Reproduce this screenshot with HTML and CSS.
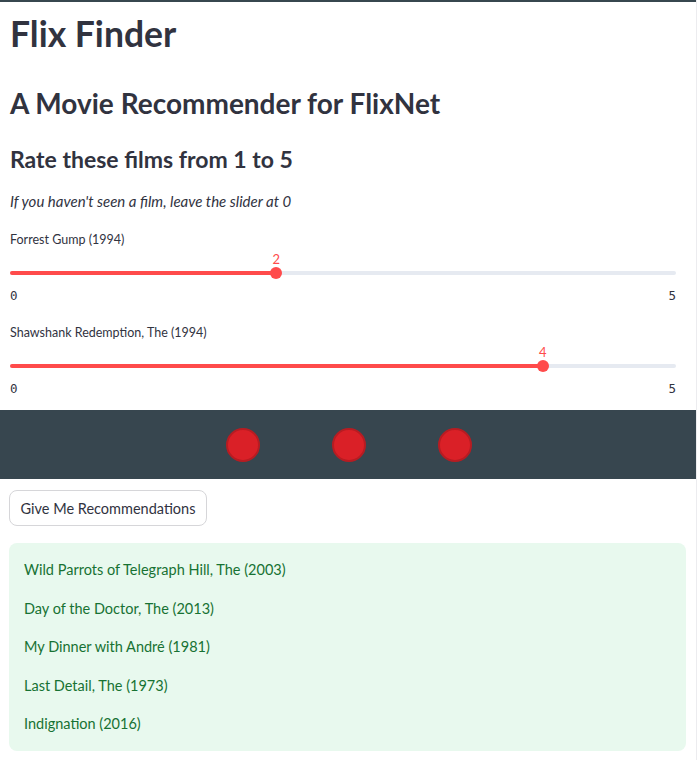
FILE: index.html
```html
<!DOCTYPE html>
<html lang="en">
<head>
<meta charset="utf-8">
<title>Flix Finder</title>
<link rel="stylesheet" href="styles.css">
</head>
<body>
<div class="page">
  <div class="topbar"></div>
  <div class="content">
    <h1 class="title">Flix Finder</h1>
    <h2 class="subtitle">A Movie Recommender for FlixNet</h2>
    <h3 class="section">Rate these films from 1 to 5</h3>
    <p class="hint">If you haven't seen a film, leave the slider at 0</p>

    <div class="slider slider-first">
      <div class="slider-label">Forrest Gump (1994)</div>
      <div class="slider-track-area">
        <div class="track">
          <div class="fill" style="width:40%"></div>
          <div class="thumb" style="left:40%"><span class="thumb-value">2</span></div>
        </div>
      </div>
      <div class="slider-range"><span>0</span><span>5</span></div>
    </div>

    <div class="slider">
      <div class="slider-label">Shawshank Redemption, The (1994)</div>
      <div class="slider-track-area">
        <div class="track">
          <div class="fill" style="width:80%"></div>
          <div class="thumb" style="left:80%"><span class="thumb-value">4</span></div>
        </div>
      </div>
      <div class="slider-range"><span>0</span><span>5</span></div>
    </div>
  </div>

  <div class="band">
    <span class="dot"></span>
    <span class="dot"></span>
    <span class="dot"></span>
  </div>

  <div class="content">
    <button class="btn" type="button">Give Me Recommendations</button>
    <div class="success">
      <p class="rec">Wild Parrots of Telegraph Hill, The (2003)</p>
      <p class="rec">Day of the Doctor, The (2013)</p>
      <p class="rec">My Dinner with André (1981)</p>
      <p class="rec">Last Detail, The (1973)</p>
      <p class="rec">Indignation (2016)</p>
    </div>
  </div>
</div>
</body>
</html>
```

FILE: styles.css
```css
* { box-sizing: border-box; }

html, body {
  margin: 0;
  padding: 0;
  background: #ffffff;
}

body {
  font-family: "Lato", "Noto Sans", sans-serif;
  color: #31333f;
}

.page {
  width: 697px;
  min-height: 760px;
  border-right: 1px solid #ececef;
}

.topbar {
  height: 2px;
  background: #37474f;
}

.content {
  padding: 0 10px 0 9px;
}

.title {
  margin: 0;
  height: 64px;
  line-height: 64px;
  font-size: 35.5px;
  font-weight: 700;
  padding-left: 1px;
}

.subtitle {
  margin: 0;
  height: 75px;
  line-height: 75px;
  font-size: 28px;
  font-weight: 700;
  padding-left: 1px;
}

.section {
  margin: 0;
  height: 36px;
  line-height: 36px;
  font-size: 23px;
  font-weight: 700;
  padding-left: 1px;
}

.hint {
  margin: 0;
  height: 48px;
  line-height: 48px;
  font-size: 15px;
  font-style: italic;
  padding-left: 1px;
}

.slider {
  margin: 17px 10px 0 1px;
}

.slider-first {
  margin-top: 5px;
}

.slider-label {
  height: 20px;
  line-height: 20px;
  font-size: 12.5px;
}

.slider-track-area {
  height: 36px;
  padding-top: 21px;
}

.track {
  position: relative;
  height: 4px;
  border-radius: 2px;
  background: #e6eaf1;
}

.fill {
  height: 4px;
  border-radius: 2px;
  background: #ff4b4b;
}

.thumb {
  position: absolute;
  top: -4px;
  width: 12px;
  height: 12px;
  margin-left: -6px;
  border-radius: 50%;
  background: #ff4b4b;
}

.thumb-value {
  position: absolute;
  left: 50%;
  bottom: 12px;
  transform: translateX(-50%);
  font-size: 13px;
  line-height: 16px;
  color: #ff4b4b;
}

.slider-range {
  display: flex;
  justify-content: space-between;
  height: 20px;
  line-height: 20px;
  font-family: "DejaVu Sans Mono", "Liberation Mono", monospace;
  font-size: 12.5px;
  color: #31333f;
}

.band {
  margin-top: 11px;
  height: 69px;
  background: #37464f;
  display: flex;
  align-items: center;
  justify-content: center;
  gap: 72px;
  padding-left: 2px;
}

.dot {
  width: 34px;
  height: 34px;
  border-radius: 50%;
  background: #da2027;
  border: 2px solid #b71c22;
}

.btn {
  display: block;
  margin-top: 11px;
  width: 198px;
  height: 36px;
  padding: 0;
  white-space: nowrap;
  background: #ffffff;
  border: 1px solid #d6d6d9;
  border-radius: 8px;
  font-family: "Lato", "Noto Sans", sans-serif;
  font-size: 14.5px;
  color: #31333f;
}

.success {
  margin-top: 17px;
  padding: 8px 15px 7px;
  background: #e8f9ee;
  border-radius: 8px;
}

.rec {
  margin: 0;
  height: 38.5px;
  line-height: 38.5px;
  font-size: 14.5px;
  color: #177233;
}
```
